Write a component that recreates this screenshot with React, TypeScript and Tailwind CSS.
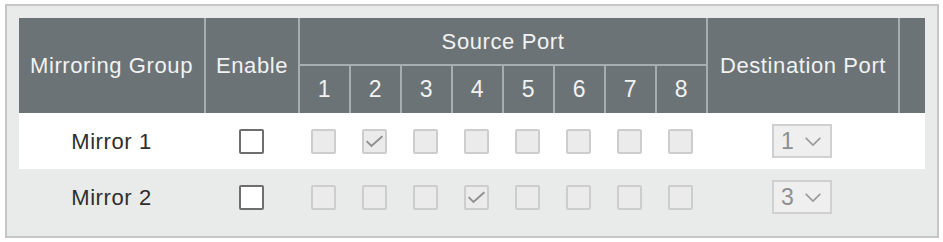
import React from 'react'

const ports = [1, 2, 3, 4, 5, 6, 7, 8]

const rows = [
    { name: 'Mirror 1', checked: 2, dest: '1', bg: 'bg-white' },
    { name: 'Mirror 2', checked: 4, dest: '3', bg: 'bg-[#e9eaea]' },
]

const cols = 'grid grid-cols-[185px_94px_repeat(8,51px)_192px_27px]'

const Check = () => (
    <svg viewBox="0 0 24 24" className="w-[21px] h-[21px]" fill="none" stroke="#8f8f8f" strokeWidth="2.2">
        <path d="M3 11.5l5.5 5.5L21 6" />
    </svg>
)

const PortBox = ({ on }: { on: boolean }) => (
    <div className="w-[25px] h-[25px] border-2 border-[#cdcdcd] bg-[#ebebeb] rounded-[2px] flex items-center justify-center">
        {on && <Check />}
    </div>
)

const Select = ({ value }: { value: string }) => (
    <div className="w-[60px] h-[34px] border-2 border-[#d0d0d0] bg-[#efefef] flex items-center pl-[7px] gap-[9px] text-[23px] text-[#8e8e8e]">
        <span>{value}</span>
        <svg viewBox="0 0 20 12" className="w-[20px] h-[11px]" fill="none" stroke="#9a9a9a" strokeWidth="1.8">
            <path d="M2 2l8 8 8-8" />
        </svg>
    </div>
)

export default function App() {
    return (
        <div className="w-[943px] h-[242px] bg-white pt-[4px] pl-[5px]" style={{ fontFamily: '"Liberation Sans", Arial, sans-serif' }}>
            <div className="w-[934px] h-[234px] border-2 border-[#c6c6c6] bg-[#e9eaea] p-[12px]">
                {/* header */}
                <div className={`${cols} grid-rows-[48px_47px] bg-[#6c7376] text-[#f1f2f2] text-[22px] tracking-[0.6px]`}>
                    <div className="row-span-2 flex items-center justify-center">Mirroring Group</div>
                    <div className="row-span-2 flex items-center justify-center border-l-2 border-[#a7aeb1]">Enable</div>
                    <div className="col-span-8 flex items-center justify-center border-l-2 border-b-2 border-[#a7aeb1]">Source Port</div>
                    <div className="row-span-2 flex items-center justify-center border-l-2 border-[#a7aeb1]">Destination Port</div>
                    <div className="row-span-2 border-l-2 border-[#a7aeb1]"></div>
                    {ports.map((p) => (
                        <div key={p} className="flex items-center justify-center border-l-2 border-[#a7aeb1] text-[23px]">
                            {p}
                        </div>
                    ))}
                </div>

                {rows.map((r) => (
                    <div key={r.name} className={`${cols} h-[56px] ${r.bg} text-[22px] text-[#2e2e2e]`}>
                        <div className="flex items-center justify-center tracking-[0.6px]">{r.name}</div>
                        <div className="flex items-center justify-center">
                            <div className="w-[25px] h-[25px] border-2 border-[#6e6e6e] bg-white rounded-[2px]"></div>
                        </div>
                        {ports.map((p) => (
                            <div key={p} className="flex items-center justify-center">
                                <PortBox on={p === r.checked} />
                            </div>
                        ))}
                        <div className="flex items-center justify-center">
                            <Select value={r.dest} />
                        </div>
                        <div></div>
                    </div>
                ))}
            </div>
        </div>
    )
}
